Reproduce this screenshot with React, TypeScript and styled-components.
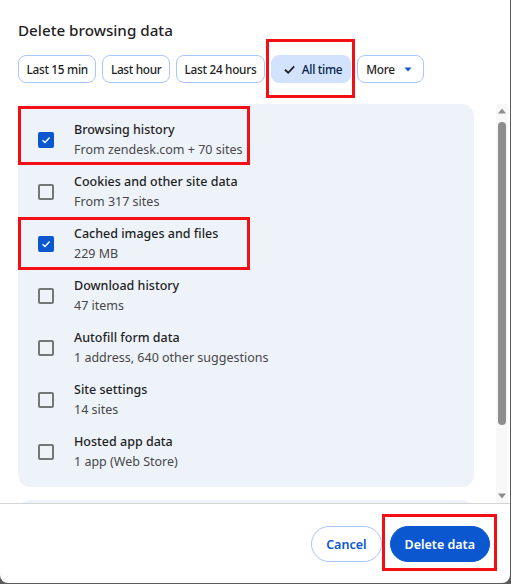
import React from "react";
import styled, { createGlobalStyle } from "styled-components";

const GlobalStyle = createGlobalStyle`
  html, body {
    margin: 0;
    padding: 0;
    background: #5b5b5b;
  }
  body {
    font-family: "Noto Sans", "Open Sans", sans-serif;
    -webkit-font-smoothing: antialiased;
  }
`;

const Dialog = styled.div`
  width: 510px;
  height: 583px;
  background: #ffffff;
  border-radius: 0 0 8px 8px;
  display: flex;
  flex-direction: column;
  overflow: hidden;
`;

const Title = styled.h1`
  margin: 0;
  padding: 18px 18px 0;
  height: 24px;
  font-size: 15.2px;
  line-height: 24px;
  font-weight: 500;
  color: #1f1f1f;
`;

const ChipRow = styled.div`
  display: flex;
  gap: 6px;
  padding: 13px 18px 0;
`;

const Highlight = styled.div`
  position: relative;
  display: flex;
`;

const RedBox = styled.div<{ $t: number; $r: number; $b: number; $l: number }>`
  position: absolute;
  top: ${(p) => p.$t}px;
  right: ${(p) => p.$r}px;
  bottom: ${(p) => p.$b}px;
  left: ${(p) => p.$l}px;
  border: 3px solid #f20f16;
  pointer-events: none;
`;

const Chip = styled.button<{ $selected?: boolean; $menu?: boolean }>`
  height: 28px;
  box-sizing: border-box;
  padding: ${(p) => (p.$selected ? "0 8px 0 11px" : p.$menu ? "0 11px 0 8px" : "0 7.5px")};
  border-radius: 8px;
  border: 1px solid ${(p) => (p.$selected ? "#d3e3fd" : "#a8c7fa")};
  background: ${(p) => (p.$selected ? "#d3e3fd" : "#ffffff")};
  color: ${(p) => (p.$selected ? "#041e49" : "#1f1f1f")};
  font-family: inherit;
  font-size: 11.8px;
  letter-spacing: -0.3px;
  font-weight: 500;
  display: flex;
  align-items: center;
  gap: ${(p) => (p.$menu ? "9px" : "6px")};
  white-space: nowrap;
`;

const ScrollArea = styled.div`
  margin-top: 21px;
  height: 399px;
  display: flex;
  border-bottom: 1px solid #d4d4d4;
`;

const ScrollContent = styled.div`
  flex: 1;
  padding: 0 22px 0 18px;
  display: flex;
  flex-direction: column;
  gap: 13px;
  overflow: hidden;
`;

const Panel = styled.div<{ $peek?: boolean }>`
  background: #eef3fa;
  border-radius: 12px;
  padding: 10px 0 9px;
  flex-shrink: 0;
  height: ${(p) => (p.$peek ? "40px" : "auto")};
`;

const Row = styled.div`
  position: relative;
  height: 52px;
  display: flex;
  align-items: center;
`;

const BoxCell = styled.div`
  width: 56px;
  display: flex;
  justify-content: center;
`;

const Check = styled.div<{ $on?: boolean }>`
  width: 16px;
  height: 16px;
  box-sizing: border-box;
  border-radius: 2px;
  border: 2px solid ${(p) => (p.$on ? "#0b57d0" : "#747775")};
  background: ${(p) => (p.$on ? "#0b57d0" : "transparent")};
  display: flex;
  align-items: center;
  justify-content: center;
`;

const Texts = styled.div`
  display: flex;
  flex-direction: column;
`;

const Label = styled.div`
  font-size: 12.5px;
  line-height: 20px;
  font-weight: 500;
  color: #1f1f1f;
`;

const Sub = styled.div`
  font-size: 12.5px;
  line-height: 20px;
  color: #474747;
`;

const Scrollbar = styled.div`
  width: 12px;
  margin-right: 2px;
  background: #f8f8f8;
  display: flex;
  flex-direction: column;
  align-items: center;
`;

const Arrow = styled.div<{ $down?: boolean }>`
  height: 14px;
  display: flex;
  align-items: center;
  justify-content: center;
  transform: ${(p) => (p.$down ? "rotate(180deg)" : "none")};
`;

const Thumb = styled.div`
  width: 8px;
  height: 303px;
  margin-top: 4px;
  border-radius: 4px;
  background: #8d8d8d;
`;

const Spacer = styled.div`
  flex: 1;
`;

const Footer = styled.div`
  flex: 1;
  display: flex;
  justify-content: flex-end;
  align-items: flex-start;
  gap: 8px;
  padding: 22px 20px 0 0;
`;

const Button = styled.button<{ $primary?: boolean }>`
  height: 36px;
  box-sizing: border-box;
  padding: 0 14px;
  border-radius: 18px;
  border: 1px solid ${(p) => (p.$primary ? "#0b57d0" : "#a8c7fa")};
  background: ${(p) => (p.$primary ? "#0b57d0" : "#ffffff")};
  color: ${(p) => (p.$primary ? "#ffffff" : "#0b57d0")};
  font-family: inherit;
  font-size: 12.5px;
  font-weight: 600;
`;

const CheckMark = ({ color = "#fff", size = 10 }: { color?: string; size?: number }) => (
  <svg width={size} height={size} viewBox="0 0 10 10">
    <path d="M1.5 5.2 L4 7.5 L8.6 2.6" fill="none" stroke={color} strokeWidth="1.4" />
  </svg>
);

const Caret = () => (
  <svg width="8" height="5" viewBox="0 0 8 5">
    <path d="M0.5 0.5 H7.5 L4 4.5 Z" fill="#0b57d0" />
  </svg>
);

const ArrowUp = () => (
  <svg width="8" height="6" viewBox="0 0 8 6">
    <path d="M0 5.5 L4 0.5 L8 5.5 Z" fill="#8d8d8d" />
  </svg>
);

const items = [
  { label: "Browsing history", sub: "From zendesk.com + 70 sites", on: true, box: { t: -8, b: 1 } },
  { label: "Cookies and other site data", sub: "From 317 sites", on: false },
  { label: "Cached images and files", sub: "229 MB", on: true, box: { t: -1, b: 0 } },
  { label: "Download history", sub: "47 items", on: false },
  { label: "Autofill form data", sub: "1 address, 640 other suggestions", on: false },
  { label: "Site settings", sub: "14 sites", on: false },
  { label: "Hosted app data", sub: "1 app (Web Store)", on: false },
];

export default function App() {
  return (
    <>
      <GlobalStyle />
      <Dialog>
        <Title>Delete browsing data</Title>
        <ChipRow>
          <Chip>Last 15 min</Chip>
          <Chip>Last hour</Chip>
          <Chip>Last 24 hours</Chip>
          <Highlight>
            <Chip $selected>
              <CheckMark color="#1f1f1f" size={13} />
              All time
            </Chip>
            <RedBox $t={-16} $r={-4} $b={-15} $l={-5} />
          </Highlight>
          <Chip $menu>
            More
            <Caret />
          </Chip>
        </ChipRow>
        <ScrollArea>
          <ScrollContent>
            <Panel>
              {items.map((it) => (
                <Row key={it.label}>
                  <BoxCell>
                    <Check $on={it.on}>{it.on && <CheckMark />}</Check>
                  </BoxCell>
                  <Texts>
                    <Label>{it.label}</Label>
                    <Sub>{it.sub}</Sub>
                  </Texts>
                  {it.box && <RedBox $t={it.box.t} $b={it.box.b} $l={0} $r={224} />}
                </Row>
              ))}
            </Panel>
            <Panel $peek />
          </ScrollContent>
          <Scrollbar>
            <Arrow>
              <ArrowUp />
            </Arrow>
            <Thumb />
            <Spacer />
            <Arrow $down>
              <ArrowUp />
            </Arrow>
          </Scrollbar>
        </ScrollArea>
        <Footer>
          <Button>Cancel</Button>
          <Highlight>
            <Button $primary>Delete data</Button>
            <RedBox $t={-12} $r={-7} $b={-9} $l={-8} />
          </Highlight>
        </Footer>
      </Dialog>
    </>
  );
}
